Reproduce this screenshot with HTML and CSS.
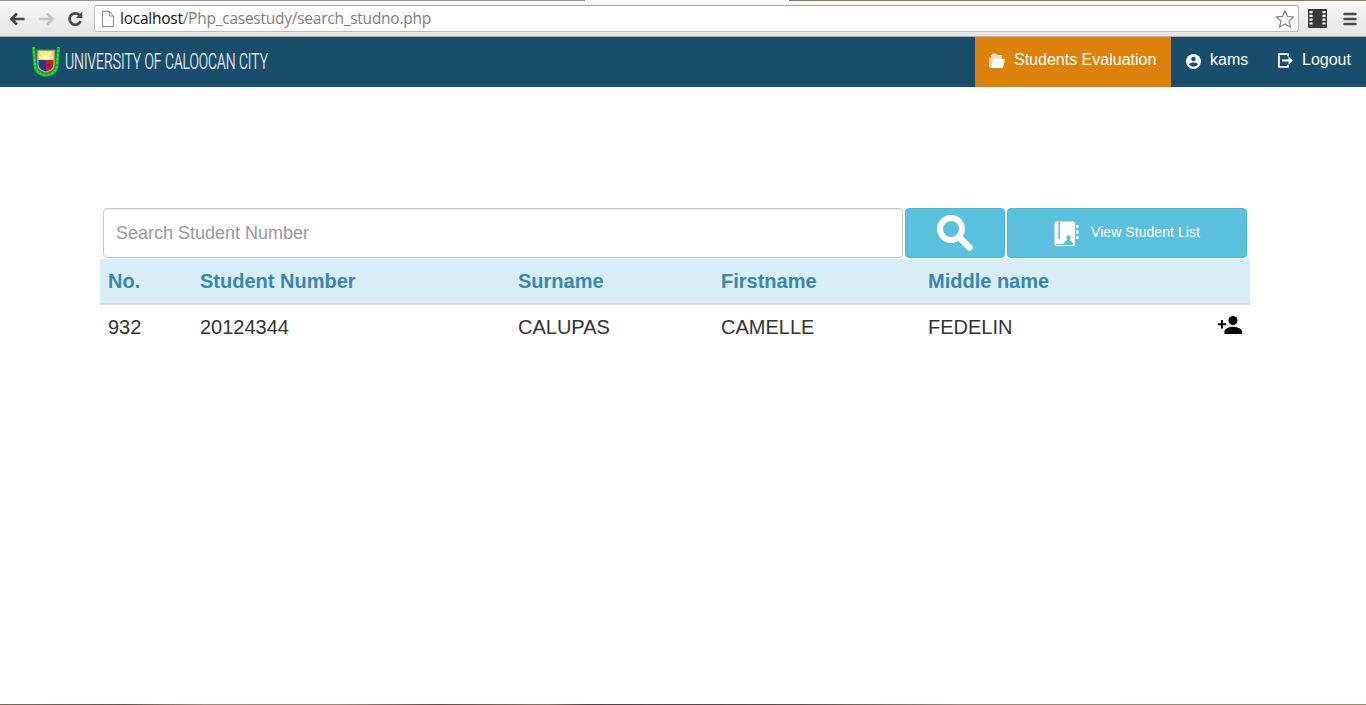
FILE: index.html
```html
<!DOCTYPE html>
<html lang="en">
<head>
<meta charset="utf-8">
<title>University of Caloocan City</title>
<link rel="stylesheet" href="styles.css">
</head>
<body>
<div class="window">
  <div class="tabstrip"><i class="tab"></i><i class="frame"></i></div>
  <div class="toolbar">
    <svg class="tool" width="16" height="16" viewBox="0 0 16 16"><path d="M8 2.500 2.500 8 8 13.500M3 8h12.500" fill="none" stroke="#4a4a4a" stroke-width="2.700"/></svg>
    <svg class="tool forward" width="16" height="16" viewBox="0 0 16 16"><path d="M8 2.500 13.500 8 8 13.500M13 8H.500" fill="none" stroke="#c4c4c4" stroke-width="2.700"/></svg>
    <svg class="tool reload" width="16" height="16" viewBox="0 0 16 16"><path d="M12.500 4.200A5.700 5.700 0 1 0 13.600 10" fill="none" stroke="#4a4a4a" stroke-width="2.700"/><path d="M15.300.500V7H8.800z" fill="#4a4a4a"/></svg>
    <div class="address">
      <svg width="12" height="16" viewBox="0 0 12 16"><path d="M.500.500h7L11.500 5v10.500H.500zM7.500.500V5h4" fill="#fff" stroke="#8b8b8b"/></svg>
      <span class="url"><span class="host">localhost</span>/Php_casestudy/search_studno.php</span>
      <svg class="star" width="20" height="20" viewBox="0 0 20 20"><path d="m10 1.500 2.500 5.900 6.200.500-4.700 4.100 1.500 6.200-5.500-3.300-5.500 3.300L6 12 1.300 7.900l6.200-.500z" fill="#fff" stroke="#858585" stroke-width="1.200" stroke-linejoin="round"/></svg>
    </div>
    <svg class="film" width="19" height="19" viewBox="0 0 19 19"><rect width="19" height="19" rx="1" fill="#383838"/><path d="M3 2v15.500M16 2v15.500" stroke="#eee" stroke-width="3.200" stroke-dasharray="2.200 1.600"/></svg>
    <svg class="burger" width="14" height="14" viewBox="0 0 14 14"><path d="M1.500 2h11M1.500 7h11M1.500 12h11" stroke="#4a4a4a" stroke-width="2.400" stroke-linecap="round"/></svg>
  </div>
  <nav class="navbar">
    <a class="brand">
      <svg width="28" height="32" viewBox="0 0 28 32">
        <path d="M1.500 1 3 19c0 6 5 10 11 10s11-4 11-10l1.500-18" fill="none" stroke="#15c51c" stroke-width="3"/>
        <path d="M1.500 1 3 19c0 6 5 10 11 10s11-4 11-10l1.500-18" fill="none" stroke="#35ee2b" stroke-width="1.200" stroke-dasharray="2 2"/>
        <path d="M5 4h18v14c0 6-4 7.500-9 9-5-1.500-9-3-9-9z" fill="#b9bcae" stroke="#777d72"/>
        <path d="M6.500 5h15v9h-15z" fill="#f7e34a"/>
        <path d="m14 13-7-2m7 2L9 6m5 7V5m0 8 5-7m-5 7 7-2" stroke="#fffce0" stroke-width="1.500"/>
        <path d="M6.500 14H14v11.500c-5-1.500-7.500-3-7.500-8z" fill="#173a9e"/>
        <path d="M14 14h7.500v3.500c0 5-2.500 6.500-7.500 8z" fill="#c91c24"/>
        <path d="M9 18h3v3H9m8-4v5m-2-3h4" fill="none" stroke="#592a55"/>
      </svg>
      <svg class="wordmark" width="210" height="30"><text x="0" y="22" textLength="203" lengthAdjust="spacingAndGlyphs">UNIVERSITY OF CALOOCAN CITY</text></svg>
    </a>
    <a class="item active">
      <svg width="16" height="16" viewBox="0 0 16 16"><path d="M2 13V2h1V.500h4L8.500 2H13v4H5z" fill="#f6ddb9"/><path d="M0 4v10l1.500 1 2-8.500" fill="#f2cf9c"/><path d="M4.300 5.800H16L14 15H1.800z" fill="#fff"/></svg>
      <span>Students Evaluation</span>
    </a>
    <a class="item user">
      <svg width="15" height="15" viewBox="0 0 15 15"><circle cx="7.500" cy="7.500" r="7.500" fill="#fff"/><circle cx="7.500" cy="5" r="2.300" fill="#184e6c"/><path d="M3 10.200c1-2.300 8-2.300 9 0-2 3.300-7 3.300-9 0z" fill="#184e6c"/></svg>
      <span>kams</span>
    </a>
    <a class="item logout">
      <svg width="16" height="15" viewBox="0 0 16 15"><path d="M11 3.200V1.200H1.900v12.600H11v-2M5 7.500h9" fill="none" stroke="#fff" stroke-width="1.800"/><path d="M11.500 3.500 16 7.500l-4.500 4z" fill="#fff"/></svg>
      <span>Logout</span>
    </a>
  </nav>
  <main class="content">
    <form class="search">
      <input class="field" type="text" placeholder="Search Student Number">
      <button class="btn find" type="button" aria-label="Search">
        <svg width="38" height="38" viewBox="0 0 38 38"><circle cx="15" cy="15" r="11" fill="none" stroke="#fff" stroke-width="6"/><path d="m23 23 10.500 10.500" stroke="#fff" stroke-width="6.500" stroke-linecap="round"/></svg>
      </button>
      <button class="btn list" type="button">
        <svg width="26" height="26" viewBox="0 0 26 26"><path d="M2.500.500H19q2 0 2 2V23q0 2-2 2H2.500q-2 0-2-2V2.500q0-2 2-2z" fill="#fff"/><path d="M5.200 1v17" stroke="#5bc0de" stroke-width="1.500"/><path d="M2 23.500h17" stroke="#5bc0de"/><circle cx="14.500" cy="16.500" r="2.200" fill="#5bc0de"/><path d="M9.500 23c1-3 3.500-2.500 4-5h2c.500 2.500 3 2 4 5z" fill="#5bc0de"/><path d="M22 4h2.500v3H22zm0 5.500h2.500v3H22zm0 5.500h2.500v3H22z" fill="#fff"/></svg>
        <span>View Student List</span>
      </button>
    </form>
    <table class="students">
      <colgroup><col class="c-no"><col class="c-num"><col class="c-sur"><col class="c-first"><col class="c-mid"><col></colgroup>
      <thead><tr><th>No.</th><th>Student Number</th><th>Surname</th><th>Firstname</th><th>Middle name</th><th></th></tr></thead>
      <tbody><tr><td>932</td><td>20124344</td><td>CALUPAS</td><td>CAMELLE</td><td>FEDELIN</td>
        <td class="action"><svg width="24" height="18" viewBox="0 0 24 18"><circle cx="15" cy="4.500" r="4.500"/><path d="M6.500 18v-2.500c0-3 5-4.700 8.500-4.700s9 1.700 9 4.700V18zM3 4h2v3.200h3.300v2H5v3.300H3V9.200H0v-2h3z"/></svg></td></tr></tbody>
    </table>
  </main>
  <div class="desktop-edge"></div>
</div>
</body>
</html>
```
FILE: styles.css
```css
* { box-sizing: border-box; }
body { margin: 0; background: #fff; font-family: "Liberation Sans", Arial, sans-serif; overflow: hidden; }
svg { display: block; flex: none; }
.window { height: 705px; display: flex; flex-direction: column; }
.tabstrip { height: 1px; flex: none; display: flex; background: #999494; }
.tab { width: 204px; margin-left: 585px; background: #f7f7f7; }
.frame { flex: 1; background: #8c7961; }
.toolbar { height: 36px; flex: none; display: flex; align-items: center; padding: 0 9px; background: linear-gradient(#f8f8f8, #e5e5e5); border-bottom: 1px solid #b0b0b0; }
.forward { margin-left: 14px; }
.reload { margin-left: 12px; }
.address { width: 1205px; height: 27px; margin-left: 11px; display: flex; align-items: center; padding: 0 3px 0 7px; background: #fff; border: 1px solid #bdbdbd; border-top-color: #a5a5a5; border-radius: 3px; }
.url { margin-left: 6px; padding-bottom: 2px; font: 15.500px "Open Sans", sans-serif; letter-spacing: -.250px; color: #808080; white-space: nowrap; }
.host { color: #111; }
.star { margin-left: auto; }
.film { margin-left: 9px; }
.burger { margin-left: 16px; }
.navbar { height: 50px; flex: none; display: flex; background: #184e6c; color: #fff; font-size: 16px; }
.brand { display: flex; align-items: center; padding-left: 32px; margin-right: auto; }
.wordmark { margin-left: 5px; overflow: visible; }
.wordmark text { font: 300 21.500px Roboto, sans-serif; fill: #f4f8fb; stroke: #f4f8fb; stroke-width: .200px; }
.item { display: flex; align-items: center; padding: 0 15px 4px 14px; gap: 9px; white-space: nowrap; }
.active { width: 196px; background: #dc8109; }
.item svg { margin-top: 2px; }
.user { width: 92px; padding-right: 0; padding-left: 15px; }
.logout { width: 103px; }
.logout svg { margin-top: 1px; }
.content { flex: 1; padding: 121px 116px 0 100px; }
.search { display: flex; gap: 2px; padding: 0 3px; }
.field { width: 800px; height: 50px; padding: 0 12px; border: 1px solid #c9c9c9; border-radius: 4px; box-shadow: inset 0 1px 1px #0001; font: 18px "Liberation Sans", Arial, sans-serif; }
.field::placeholder { color: #999; opacity: 1; }
.btn { height: 50px; padding: 0; display: flex; align-items: center; justify-content: center; background: #5bc0de; border: 1px solid #46b8da; border-radius: 4px; color: #fff; font: 14px "Liberation Sans", Arial, sans-serif; }
.find { width: 100px; }
.list { width: 240px; gap: 11px; }
.list svg { margin-top: 1px; }
.list span { padding-bottom: 2px; letter-spacing: .060px; }
.students { width: 1150px; margin-top: 1px; table-layout: fixed; border-collapse: collapse; font-size: 20px; line-height: 28px; color: #333; }
.c-no { width: 92px; }
.c-num { width: 318px; }
.c-sur { width: 203px; }
.c-first { width: 207px; }
.c-mid { width: 270px; }
th, td { padding: 8px; text-align: left; vertical-align: top; }
th { background: #d9edf7; color: #3a87ad; border-bottom: 2px solid #ddd; }
.action svg { margin: 3px 0 0 auto; }
.desktop-edge { height: 1px; flex: none; background: linear-gradient(90deg, #80694f, #6b5144 9%, #a98a68 15%, #a58369 25%, #6b4840 32%, #956f50 40%, #573f41 43%, #604a46 58%, #a18570 70%, #a18b63); }
```
